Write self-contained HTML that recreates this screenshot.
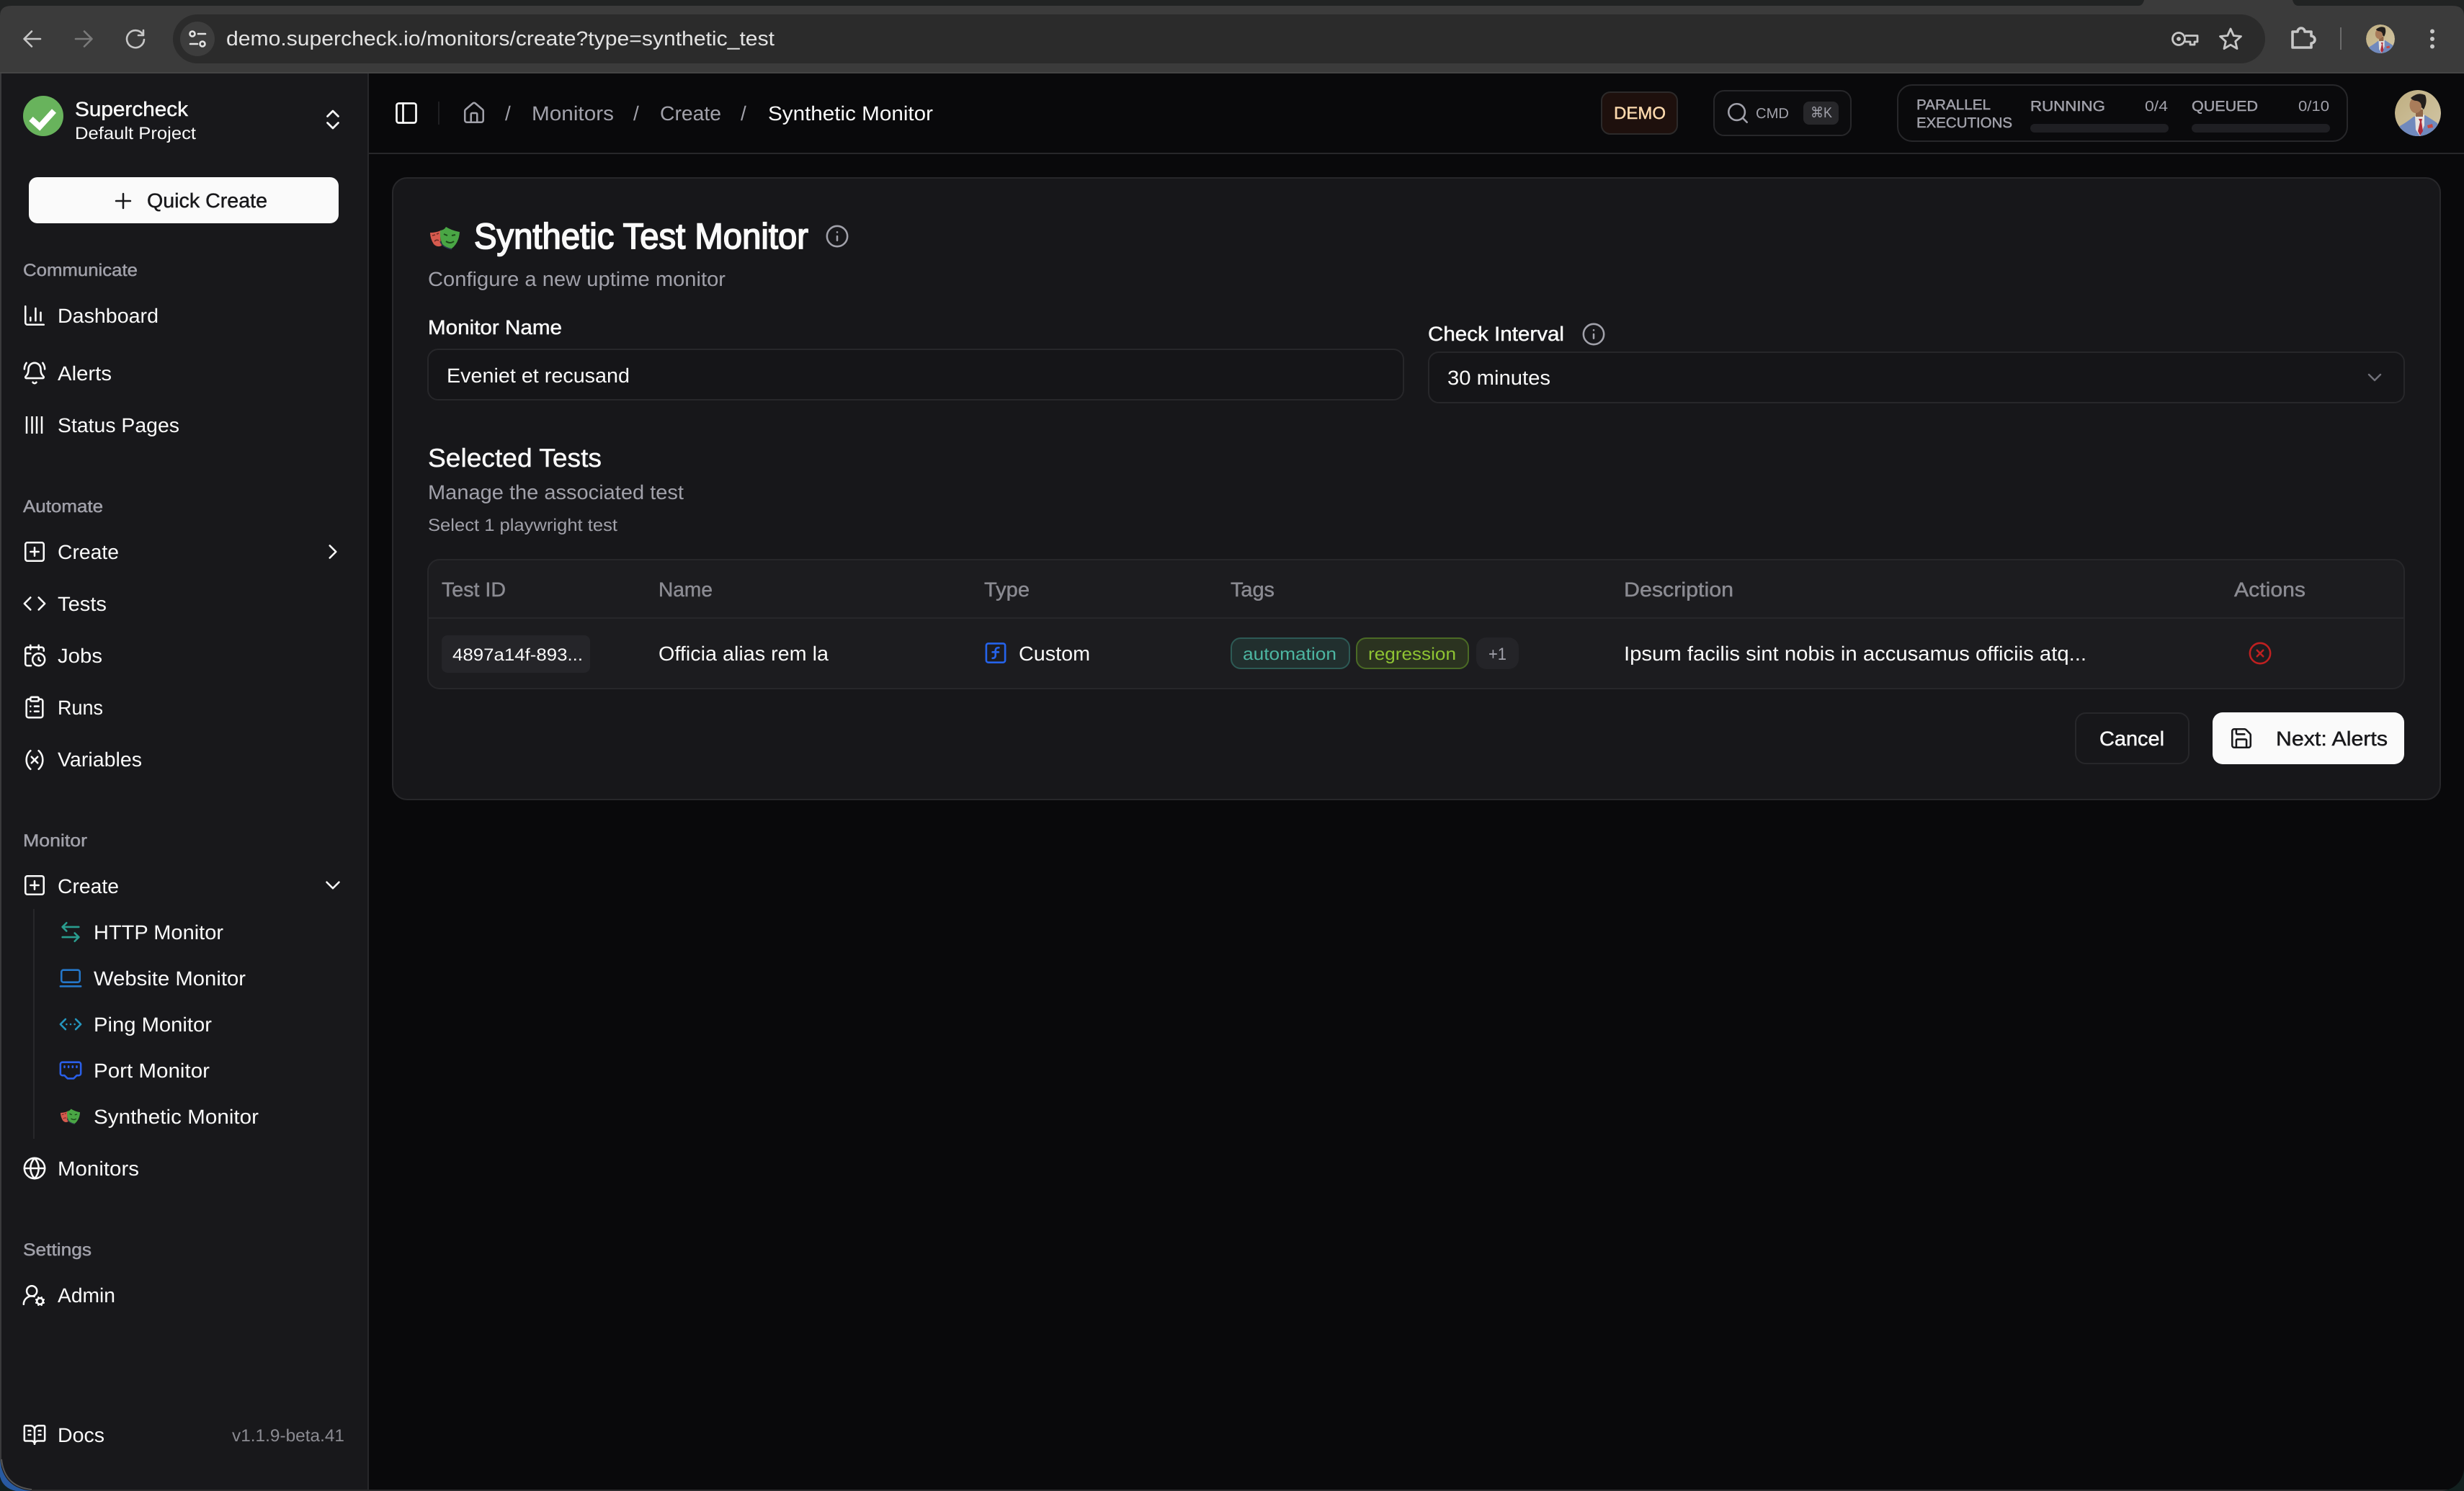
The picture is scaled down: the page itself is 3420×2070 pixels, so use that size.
<!DOCTYPE html>
<html lang="en">
<head>
<meta charset="utf-8">
<title>Synthetic Test Monitor</title>
<style>
html,body{margin:0;padding:0;background:#09090b;width:3420px;height:2070px;overflow:hidden}
svg.root{display:block}
text{font-family:"Liberation Sans","Noto Sans CJK SC",sans-serif;text-rendering:geometricPrecision;white-space:pre}
.w{fill:#fafafa;color:#fafafa}
.g{fill:#a1a1aa;color:#a1a1aa}
.d{fill:#8b8b92;color:#8b8b92}
.k{fill:#18181b;color:#18181b}
.m{stroke:currentColor;stroke-width:.45}
.i{fill:none;stroke:#fafafa;stroke-width:1.8;stroke-linecap:round;stroke-linejoin:round}
.ig{fill:none;stroke:#a1a1aa;stroke-width:1.8;stroke-linecap:round;stroke-linejoin:round}
.c{fill:none;stroke:#c7c7c7;stroke-width:2.6;stroke-linecap:round;stroke-linejoin:round}
</style>
</head>
<body>
<svg class="root" xmlns="http://www.w3.org/2000/svg" width="3420" height="2070" viewBox="0 0 3420 2070">
<defs>
<clipPath id="av"><circle r="32"/></clipPath>
<linearGradient id="avbg" x1="0" y1="0" x2="1" y2="1"><stop offset="0" stop-color="#bfae80"/><stop offset="1" stop-color="#d2c6a6"/></linearGradient>
<g id="avatar" clip-path="url(#av)">
<circle r="32" fill="url(#avbg)"/>
<path d="M-30 34L-25 18Q-13 11-6 5L10 3Q20 9 27 14L32 34Z" fill="#7089bd"/>
<path d="M-4 4L9 2L9 17L3 32L-3 23Z" fill="#e6e2de"/>
<path d="M1 8L6 8L5 12L7 25L3 31L0 25L3 12Z" fill="#ae2b3a"/>
<path d="M13 17L20 15L21 20L14 21Z" fill="#c8483f"/>
<rect x="-3" y="-5" width="10" height="10" fill="#8f6548"/>
<ellipse cx="-3" cy="-11" rx="8.500" ry="11" fill="#a97c5a"/>
<path d="M-10-21Q0-30 10-25Q14-16 8-5L5-8Q5-16-2-17Q-7-17-10-21Z" fill="#221e1c"/>
</g>
<g id="pw">
<path d="M0 8Q8 8 15 5Q13 16 16 26Q10 29 5 24Q0 16 0 8Z" fill="#d65a4e"/>
<path d="M3 12l4-1M9 10l3-1M6 20q3-3 6-1" fill="none" stroke="#6e2a25" stroke-width="1.6"/>
<path d="M14 5Q20 4 22 0Q30 5 41 7Q40 22 30 30Q22 29 17 24Q13 16 14 5Z" fill="#4aa645"/>
<path d="M19 10l5 2M30 12l5-1M22 20q6 4 11 0" fill="none" stroke="#1c4a1a" stroke-width="2"/>
<path d="M14 20Q16 28 30 31" fill="none" stroke="#2d3a55" stroke-width="1.4"/>
</g>
</defs>

<!-- browser chrome -->
<rect width="3420" height="102" fill="#3b3b3b"/>
<rect width="3420" height="8" fill="#212323"/>
<path d="M2968 8q6 0 8-8h206q2 8 8 8z" fill="#3b3b3b"/>
<path d="M0 8h16q-16 0-16 14z" fill="#212323"/>
<path d="M3420 8h-16q16 0 16 14z" fill="#212323"/>
<rect y="100" width="3420" height="2" fill="#454545"/>
<path class="c" d="M56 54H34M44 43.500L33.500 54 44 64.500"/>
<path class="c" style="stroke:#7a7a7a" d="M105 54H127M117 43.500L127.500 54 117 64.500"/>
<path class="c" d="M198 47.500A12 12 0 1 0 200 55M199 42v7h-7"/>
<rect x="240" y="20" width="2904" height="68" rx="34" fill="#2b2b2b"/>
<circle cx="274" cy="54" r="24" fill="#3d3d3d"/>
<g fill="none" stroke="#e3e3e3" stroke-width="2.600" stroke-linecap="round">
<circle cx="267" cy="47" r="3.500"/><path d="M275 47h10M264 61h10"/><circle cx="281" cy="61" r="3.500"/>
</g>
<text x="314" y="63" font-size="28" fill="#e3e3e3" textLength="761" lengthAdjust="spacingAndGlyphs">demo.supercheck.io/monitors/create?type=synthetic_test</text>
<g fill="none" stroke="#c7c7c7" stroke-width="2.800" stroke-linejoin="round">
<circle cx="3024" cy="54" r="8.500"/><circle cx="3024" cy="54" r="1.500"/>
<path d="M3033 49.500H3050V58H3046V62H3040V58H3033"/>
<path d="M3096 40l4.200 9.500 10.300 1-7.800 6.900 2.300 10.100-9-5.300-9 5.300 2.300-10.100-7.800-6.900 10.300-1z"/>
<path d="M3182 44H3189a5 5 0 0 1 10 0H3208V50a4.800 4.800 0 0 1 0 10V66H3182Z" stroke-width="3.600"/>
</g>
<rect x="3248" y="38" width="2" height="31" fill="#6b6b6b"/>
<use href="#avatar" transform="translate(3304 54) scale(.625)"/>
<g fill="#c7c7c7"><circle cx="3376" cy="43.500" r="3"/><circle cx="3376" cy="54" r="3"/><circle cx="3376" cy="64.500" r="3"/></g>

<!-- main background -->
<rect y="102" width="3420" height="1968" fill="#09090b"/>
<!-- sidebar -->
<rect x="0" y="102" width="511" height="1968" fill="#18181b"/>
<rect x="510" y="102" width="2" height="1968" fill="#27272a"/>
<rect x="0" y="102" width="2" height="1968" fill="#3a3a3c"/>
<path d="M0 2026V2070H44Q4 2066 0 2026Z" fill="#285aa0"/>
<path d="M0 2050V2070H22Q4 2066 0 2050Z" fill="#12201f"/>
<path d="M2 2026Q6 2064 44 2068" fill="none" stroke="#555" stroke-width="2"/>
<rect x="44" y="2068" width="3376" height="2" fill="#2c2c2e"/>
<path d="M3420 2040V2070H3390Q3416 2066 3420 2040Z" fill="#12201f"/>

<circle cx="60" cy="161" r="28" fill="#68b35c"/>
<path d="M43 165L55 176L75 154" fill="none" stroke="#fff" stroke-width="8"/>
<text class="w m" x="104" y="161" font-size="28" textLength="157" lengthAdjust="spacingAndGlyphs">Supercheck</text>
<text class="w" x="104" y="193" font-size="24" textLength="168" lengthAdjust="spacingAndGlyphs">Default Project</text>
<svg class="i" x="444" y="148" width="36" height="36" viewBox="0 0 24 24"><path d="m7 15 5 5 5-5"/><path d="m7 9 5-5 5 5"/></svg>

<rect x="40" y="246" width="430" height="64" rx="12" fill="#fafafa"/>
<svg class="i" style="stroke:#18181b" x="154" y="262" width="34" height="34" viewBox="0 0 24 24"><path d="M5 12h14"/><path d="M12 5v14"/></svg>
<text class="k m" x="204" y="288" font-size="28" textLength="167" lengthAdjust="spacingAndGlyphs">Quick Create</text>

<!-- Communicate -->
<text class="g m" x="32" y="383" font-size="24" textLength="159" lengthAdjust="spacingAndGlyphs">Communicate</text>
<svg class="i" x="31" y="421" width="34" height="34" viewBox="0 0 24 24"><path d="M3 3v16a2 2 0 0 0 2 2h16"/><path d="M18 17V9"/><path d="M13 17V5"/><path d="M8 17v-3"/></svg>
<text class="w" x="80" y="448" font-size="28" textLength="140" lengthAdjust="spacingAndGlyphs">Dashboard</text>
<svg class="i" x="31" y="501" width="34" height="34" viewBox="0 0 24 24"><path d="M10.268 21a2 2 0 0 0 3.464 0"/><path d="M22 8c0-2.300-.8-4.300-2-6"/><path d="M3.262 15.326A1 1 0 0 0 4 17h16a1 1 0 0 0 .74-1.673C19.410 13.956 18 12.499 18 8A6 6 0 0 0 6 8c0 4.499-1.411 5.956-2.738 7.326"/><path d="M4 2C2.800 3.700 2 5.700 2 8"/></svg>
<text class="w" x="80" y="528" font-size="28" textLength="75" lengthAdjust="spacingAndGlyphs">Alerts</text>
<g stroke="#fafafa" stroke-width="2.500"><path d="M37 578v24M44.500 578v24M51 578v24M58 578v24"/></g>
<text class="w" x="80" y="600" font-size="28" textLength="169" lengthAdjust="spacingAndGlyphs">Status Pages</text>

<!-- Automate -->
<text class="g m" x="32" y="711" font-size="24" textLength="111" lengthAdjust="spacingAndGlyphs">Automate</text>
<svg class="i" x="31" y="749" width="34" height="34" viewBox="0 0 24 24"><rect x="3" y="3" width="18" height="18" rx="2"/><path d="M8 12h8"/><path d="M12 8v8"/></svg>
<text class="w" x="80" y="776" font-size="28" textLength="85" lengthAdjust="spacingAndGlyphs">Create</text>
<svg class="i" x="445" y="749" width="34" height="34" viewBox="0 0 24 24"><path d="m9 18 6-6-6-6"/></svg>
<svg class="i" x="31" y="821" width="34" height="34" viewBox="0 0 24 24"><path d="m16 18 6-6-6-6"/><path d="m8 6-6 6 6 6"/></svg>
<text class="w" x="80" y="848" font-size="28" textLength="68" lengthAdjust="spacingAndGlyphs">Tests</text>
<svg class="i" x="31" y="893" width="34" height="34" viewBox="0 0 24 24"><path d="M16 14v2.200l1.600 1"/><path d="M16 2v4"/><path d="M21 7.500V6a2 2 0 0 0-2-2H5a2 2 0 0 0-2 2v14a2 2 0 0 0 2 2h3.500"/><path d="M3 10h5"/><path d="M8 2v4"/><circle cx="16" cy="16" r="6"/></svg>
<text class="w" x="80" y="920" font-size="28" textLength="62" lengthAdjust="spacingAndGlyphs">Jobs</text>
<svg class="i" x="31" y="965" width="34" height="34" viewBox="0 0 24 24"><rect x="8" y="2" width="8" height="4" rx="1"/><path d="M16 4h2a2 2 0 0 1 2 2v14a2 2 0 0 1-2 2H6a2 2 0 0 1-2-2V6a2 2 0 0 1 2-2h2"/><path d="M12 11h4"/><path d="M12 16h4"/><path d="M8 11h.01"/><path d="M8 16h.01"/></svg>
<text class="w" x="80" y="992" font-size="28" textLength="63" lengthAdjust="spacingAndGlyphs">Runs</text>
<svg class="i" x="31" y="1038" width="34" height="34" viewBox="0 0 24 24"><path d="M8 21s-4-3-4-9 4-9 4-9"/><path d="M16 3s4 3 4 9-4 9-4 9"/><path d="M15 9l-6 6"/><path d="M9 9l6 6"/></svg>
<text class="w" x="80" y="1064" font-size="28" textLength="117" lengthAdjust="spacingAndGlyphs">Variables</text>

<!-- Monitor -->
<text class="g m" x="32" y="1175" font-size="24" textLength="89" lengthAdjust="spacingAndGlyphs">Monitor</text>
<svg class="i" x="31" y="1212" width="34" height="34" viewBox="0 0 24 24"><rect x="3" y="3" width="18" height="18" rx="2"/><path d="M8 12h8"/><path d="M12 8v8"/></svg>
<text class="w" x="80" y="1240" font-size="28" textLength="85" lengthAdjust="spacingAndGlyphs">Create</text>
<svg class="i" x="445" y="1212" width="34" height="34" viewBox="0 0 24 24"><path d="m6 9 6 6 6-6"/></svg>
<rect x="46" y="1262" width="2" height="319" fill="#27272a"/>
<svg class="i" style="stroke:#2a9d8f" x="81" y="1277" width="34" height="34" viewBox="0 0 24 24"><path d="M8 3 4 7l4 4"/><path d="M4 7h16"/><path d="m16 21 4-4-4-4"/><path d="M20 17H4"/></svg>
<text class="w" x="130" y="1304" font-size="28" textLength="180" lengthAdjust="spacingAndGlyphs">HTTP Monitor</text>
<svg class="i" style="stroke:#2577c9" x="81" y="1341" width="34" height="34" viewBox="0 0 24 24"><rect x="3" y="4" width="18" height="12" rx="2"/><path d="M2 20h20"/></svg>
<text class="w" x="130" y="1368" font-size="28" textLength="211" lengthAdjust="spacingAndGlyphs">Website Monitor</text>
<svg class="i" style="stroke:#2596be" x="81" y="1405" width="34" height="34" viewBox="0 0 24 24"><path d="M12 12h.01"/><path d="M16 12h.01"/><path d="m17 7 5 5-5 5"/><path d="m7 7-5 5 5 5"/><path d="M8 12h.01"/></svg>
<text class="w" x="130" y="1432" font-size="28" textLength="164" lengthAdjust="spacingAndGlyphs">Ping Monitor</text>
<svg class="i" style="stroke:#2a5fe8" x="81" y="1469" width="34" height="34" viewBox="0 0 24 24"><path d="m15 20 3-3h2a2 2 0 0 0 2-2V6a2 2 0 0 0-2-2H4a2 2 0 0 0-2 2v9a2 2 0 0 0 2 2h2l3 3z"/><path d="M6 8v1"/><path d="M10 8v1"/><path d="M14 8v1"/><path d="M18 8v1"/></svg>
<text class="w" x="130" y="1496" font-size="28" textLength="161" lengthAdjust="spacingAndGlyphs">Port Monitor</text>
<use href="#pw" transform="translate(84 1539.500) scale(.66 .68)"/>
<text class="w" x="130" y="1560" font-size="28" textLength="229" lengthAdjust="spacingAndGlyphs">Synthetic Monitor</text>
<svg class="i" x="31" y="1605" width="34" height="34" viewBox="0 0 24 24"><circle cx="12" cy="12" r="10"/><path d="M12 2a14.500 14.500 0 0 0 0 20 14.500 14.500 0 0 0 0-20"/><path d="M2 12h20"/></svg>
<text class="w" x="80" y="1632" font-size="28" textLength="113" lengthAdjust="spacingAndGlyphs">Monitors</text>

<!-- Settings -->
<text class="g m" x="32" y="1743" font-size="24" textLength="95" lengthAdjust="spacingAndGlyphs">Settings</text>
<svg class="i" x="30" y="1781" width="34" height="34" viewBox="0 0 24 24"><path d="m14.305 19.530.923-.382"/><path d="m15.228 16.852-.923-.383"/><path d="m16.852 15.228-.383-.923"/><path d="m16.852 20.772-.383.924"/><path d="m19.148 15.228.383-.923"/><path d="m19.530 21.696-.382-.924"/><path d="m20.772 16.852.924-.383"/><path d="m20.772 19.148.924.383"/><path d="M2 21a8 8 0 0 1 10.434-7.620"/><circle cx="10" cy="8" r="5"/><circle cx="18" cy="18" r="3"/></svg>
<text class="w" x="80" y="1808" font-size="28" textLength="80" lengthAdjust="spacingAndGlyphs">Admin</text>
<svg class="i" x="31" y="1975" width="34" height="34" viewBox="0 0 24 24"><path d="M12 7v14"/><path d="M16 12h2"/><path d="M16 8h2"/><path d="M3 18a1 1 0 0 1-1-1V4a1 1 0 0 1 1-1h5a4 4 0 0 1 4 4 4 4 0 0 1 4-4h5a1 1 0 0 1 1 1v13a1 1 0 0 1-1 1h-6a3 3 0 0 0-3 3 3 3 0 0 0-3-3z"/><path d="M6 12h2"/><path d="M6 8h2"/></svg>
<text class="w" x="80" y="2002" font-size="28" textLength="65" lengthAdjust="spacingAndGlyphs">Docs</text>
<text class="d" x="322" y="2001" font-size="24" textLength="156" lengthAdjust="spacingAndGlyphs">v1.1.9-beta.41</text>

<!-- header -->
<rect x="512" y="212" width="2908" height="2" fill="#27272a"/>
<svg class="i" x="546" y="139" width="36" height="36" viewBox="0 0 24 24"><rect x="3" y="3" width="18" height="18" rx="2"/><path d="M9 3v18"/></svg>
<rect x="608" y="141" width="2" height="32" fill="#1f1f22"/>
<svg class="ig" x="641" y="140" width="34" height="34" viewBox="0 0 24 24"><path d="M15 21v-8a1 1 0 0 0-1-1h-4a1 1 0 0 0-1 1v8"/><path d="M3 10a2 2 0 0 1 .709-1.528l7-5.999a2 2 0 0 1 2.582 0l7 5.999A2 2 0 0 1 21 10v9a2 2 0 0 1-2 2H5a2 2 0 0 1-2-2z"/></svg>
<text class="g" x="701" y="167" font-size="28">/</text>
<text class="g" x="738" y="167" font-size="28" textLength="114" lengthAdjust="spacingAndGlyphs">Monitors</text>
<text class="g" x="879" y="167" font-size="28">/</text>
<text class="g" x="916" y="167" font-size="28" textLength="85" lengthAdjust="spacingAndGlyphs">Create</text>
<text class="g" x="1028" y="167" font-size="28">/</text>
<text class="w" x="1066" y="167" font-size="28" textLength="229" lengthAdjust="spacingAndGlyphs">Synthetic Monitor</text>

<rect x="2223" y="128" width="105" height="58" rx="12" fill="#1e100d" stroke="#2c2a2a" stroke-width="2"/>
<text class="m" x="2240" y="165" font-size="24" fill="#fcd9ad" color="#fcd9ad" textLength="72" lengthAdjust="spacingAndGlyphs">DEMO</text>

<rect x="2379" y="126" width="190" height="62" rx="14" fill="#0c0c0e" stroke="#27272a" stroke-width="2"/>
<svg class="ig" x="2395" y="140" width="34" height="34" viewBox="0 0 24 24"><circle cx="11" cy="11" r="8"/><path d="m21 21-4.300-4.300"/></svg>
<text class="g" x="2437" y="164" font-size="20" textLength="46" lengthAdjust="spacingAndGlyphs">CMD</text>
<rect x="2503" y="141" width="49" height="32" rx="8" fill="#27272a"/>
<text class="g" x="2513" y="163" font-size="20" textLength="30" lengthAdjust="spacingAndGlyphs" style="font-family:'Liberation Sans','DejaVu Sans',sans-serif">⌘K</text>

<rect x="2634" y="118" width="624" height="78" rx="20" fill="#0a0a0c" stroke="#27272a" stroke-width="2"/>
<text class="g m" x="2660" y="152" font-size="20" textLength="103" lengthAdjust="spacingAndGlyphs">PARALLEL</text>
<text class="g m" x="2660" y="177" font-size="20" textLength="133" lengthAdjust="spacingAndGlyphs">EXECUTIONS</text>
<text class="g m" x="2818" y="154" font-size="20" textLength="104" lengthAdjust="spacingAndGlyphs">RUNNING</text>
<text class="g" x="2977" y="154" font-size="20" textLength="32" lengthAdjust="spacingAndGlyphs">0/4</text>
<text class="g m" x="3042" y="154" font-size="20" textLength="92" lengthAdjust="spacingAndGlyphs">QUEUED</text>
<text class="g" x="3190" y="154" font-size="20" textLength="43" lengthAdjust="spacingAndGlyphs">0/10</text>
<rect x="2818" y="172" width="192" height="12" rx="6" fill="#1f1f23"/>
<rect x="3042" y="172" width="192" height="12" rx="6" fill="#1f1f23"/>
<use href="#avatar" transform="translate(3356 157)"/>

<!-- card -->
<rect x="545" y="247" width="2842" height="863" rx="20" fill="#17171a" stroke="#27272a" stroke-width="2"/>
<use href="#pw" transform="translate(597 315)"/>
<text class="w" x="658" y="345" font-size="50" stroke="#fafafa" stroke-width="1.700" textLength="464" lengthAdjust="spacingAndGlyphs">Synthetic Test Monitor</text>
<svg class="ig" x="1145" y="311" width="34" height="34" viewBox="0 0 24 24"><circle cx="12" cy="12" r="10"/><path d="M12 16v-4"/><path d="M12 8h.01"/></svg>
<text class="g" x="594" y="397" font-size="28" textLength="413" lengthAdjust="spacingAndGlyphs">Configure a new uptime monitor</text>
<text class="w m" x="594" y="464" font-size="28" textLength="186" lengthAdjust="spacingAndGlyphs">Monitor Name</text>
<rect x="594" y="485" width="1354" height="70" rx="14" fill="#151518" stroke="#27272a" stroke-width="2"/>
<text class="w" x="620" y="531" font-size="28" textLength="254" lengthAdjust="spacingAndGlyphs">Eveniet et recusand</text>
<text class="w m" x="1982" y="473" font-size="28" textLength="189" lengthAdjust="spacingAndGlyphs">Check Interval</text>
<svg class="ig" x="2195" y="447" width="34" height="34" viewBox="0 0 24 24"><circle cx="12" cy="12" r="10"/><path d="M12 16v-4"/><path d="M12 8h.01"/></svg>
<rect x="1983" y="489" width="1354" height="70" rx="14" fill="#151518" stroke="#27272a" stroke-width="2"/>
<text class="w" x="2009" y="534" font-size="28" textLength="143" lengthAdjust="spacingAndGlyphs">30 minutes</text>
<svg class="i" style="stroke:#71717a" x="3280" y="508" width="32" height="32" viewBox="0 0 24 24"><path d="m6 9 6 6 6-6"/></svg>

<text class="w m" x="594" y="648" font-size="36" textLength="241" lengthAdjust="spacingAndGlyphs">Selected Tests</text>
<text class="g" x="594" y="693" font-size="28" textLength="355" lengthAdjust="spacingAndGlyphs">Manage the associated test</text>
<text class="g" x="594" y="737" font-size="24" textLength="263" lengthAdjust="spacingAndGlyphs">Select 1 playwright test</text>

<rect x="594" y="777" width="2743" height="179" rx="16" fill="#1c1c1f" stroke="#27272a" stroke-width="2"/>
<rect x="594" y="857" width="2743" height="2" fill="#27272a"/>
<text class="d m" x="613" y="828" font-size="28" textLength="89" lengthAdjust="spacingAndGlyphs">Test ID</text>
<text class="d m" x="914" y="828" font-size="28" textLength="75" lengthAdjust="spacingAndGlyphs">Name</text>
<text class="d m" x="1366" y="828" font-size="28" textLength="63" lengthAdjust="spacingAndGlyphs">Type</text>
<text class="d m" x="1708" y="828" font-size="28" textLength="61" lengthAdjust="spacingAndGlyphs">Tags</text>
<text class="d m" x="2254" y="828" font-size="28" textLength="152" lengthAdjust="spacingAndGlyphs">Description</text>
<text class="d m" x="3101" y="828" font-size="28" textLength="99" lengthAdjust="spacingAndGlyphs">Actions</text>

<rect x="613" y="882" width="206" height="52" rx="8" fill="#252529"/>
<text class="w" x="628" y="917" font-size="24" textLength="181" lengthAdjust="spacingAndGlyphs">4897a14f-893...</text>
<text class="w" x="914" y="917" font-size="28" textLength="236" lengthAdjust="spacingAndGlyphs">Officia alias rem la</text>
<svg class="i" style="stroke:#2563eb" x="1364.500" y="889" width="35" height="35" viewBox="0 0 24 24"><rect x="3" y="3" width="18" height="18" rx="2"/><path d="M9 17c2 0 2.800-1 2.800-2.800V10c0-2 1-3.300 3.200-3"/><path d="M9 11.200h5.700"/></svg>
<text class="w" x="1414" y="917" font-size="28" textLength="99" lengthAdjust="spacingAndGlyphs">Custom</text>

<rect x="1709" y="886" width="164" height="42" rx="13" fill="#212f2e" stroke="#2d5a55" stroke-width="2"/>
<text x="1725" y="916" font-size="24" fill="#4db6a2" textLength="130" lengthAdjust="spacingAndGlyphs">automation</text>
<rect x="1883" y="886" width="155" height="42" rx="13" fill="#2b3320" stroke="#4a6a25" stroke-width="2"/>
<text x="1899" y="916" font-size="24" fill="#8fc433" textLength="122" lengthAdjust="spacingAndGlyphs">regression</text>
<rect x="2049" y="885" width="59" height="44" rx="14" fill="#242428"/>
<text class="g" x="2066" y="916" font-size="24" textLength="25" lengthAdjust="spacingAndGlyphs">+1</text>
<text class="w" x="2254" y="917" font-size="28" textLength="642" lengthAdjust="spacingAndGlyphs">Ipsum facilis sint nobis in accusamus officiis atq...</text>
<svg class="i" style="stroke:#bf2020" x="3120" y="890" width="34" height="34" viewBox="0 0 24 24"><circle cx="12" cy="12" r="10"/><path d="m15 9-6 6"/><path d="m9 9 6 6"/></svg>

<rect x="2881" y="990" width="157" height="70" rx="14" fill="#17171a" stroke="#27272a" stroke-width="2"/>
<text class="w m" x="2914" y="1035" font-size="28" textLength="90" lengthAdjust="spacingAndGlyphs">Cancel</text>
<rect x="3071" y="989" width="266" height="72" rx="14" fill="#fafafa"/>
<svg class="i" style="stroke:#18181b" x="3094" y="1008" width="34" height="34" viewBox="0 0 24 24"><path d="M15.200 3a2 2 0 0 1 1.400.6l3.800 3.800a2 2 0 0 1 .6 1.400V19a2 2 0 0 1-2 2H5a2 2 0 0 1-2-2V5a2 2 0 0 1 2-2z"/><path d="M17 21v-7a1 1 0 0 0-1-1H8a1 1 0 0 0-1 1v7"/><path d="M7 3v4a1 1 0 0 0 1 1h7"/></svg>
<text class="k m" x="3159" y="1035" font-size="28" textLength="155" lengthAdjust="spacingAndGlyphs">Next: Alerts</text>
</svg>
</body>
</html>
